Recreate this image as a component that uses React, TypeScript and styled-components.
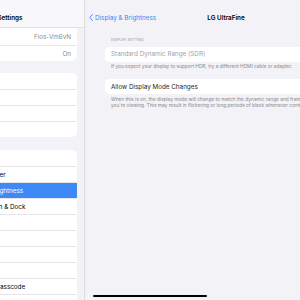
import { createGlobalStyle, styled } from "styled-components";

const GlobalStyle = createGlobalStyle`
    html, body {
        margin: 0;
        padding: 0;
    }
    body {
        background: #f2f2f7;
        font-family: Inter, "Noto Sans", sans-serif;
        -webkit-font-smoothing: antialiased;
    }
`

const Screen = styled.div`
    position: relative;
    display: flex;
    width: 300px;
    height: 300px;
    overflow: hidden;
    background: #f2f2f7;
`

const Sidebar = styled.div`
    width: 84px;
    flex-shrink: 0;
    overflow: hidden;
    border-right: 1px solid #dcdce0;
`

const SidebarInner = styled.div`
    display: flex;
    flex-direction: column;
    width: 148px;
    margin-left: -64px;
`

const SideNav = styled.div`
    display: flex;
    align-items: center;
    justify-content: center;
    height: 19px;
    padding-top: 8px;
    background: #f8f8fa;
    border-bottom: 1px solid #e2e2e5;
    font-size: 6.3px;
    font-weight: 600;
    color: #000;
`

const Group = styled.div<{ $cut?: boolean; $gap: number }>`
    margin: ${p => p.$gap}px 7px 0 10px;
    background: #fff;
    border-radius: ${p => (p.$cut ? "0 0 5px 5px" : "5px")};
    overflow: hidden;
`

const SideRow = styled.div<{ $selected?: boolean; $h?: number }>`
    display: flex;
    align-items: center;
    justify-content: space-between;
    box-sizing: border-box;
    height: ${p => p.$h ?? 16}px;
    padding: 0 6px 0 16px;
    font-size: 6.3px;
    color: ${p => (p.$selected ? "#fff" : "#000")};
    background: ${p => (p.$selected ? "#3d8af7" : "transparent")};
    white-space: nowrap;

    & + & {
        border-top: 1px solid #e6e6ea;
    }
`

const Value = styled.span`
    color: #8a8a8e;
`

const Detail = styled.div`
    display: flex;
    flex-direction: column;
    width: 282px;
    flex-shrink: 0;
`

const DetailNav = styled.div`
    display: grid;
    grid-template-columns: 1fr auto 1fr;
    align-items: center;
    height: 19px;
    margin-top: 8px;
`

const BackButton = styled.div`
    display: flex;
    align-items: center;
    gap: 2px;
    padding-left: 4px;
    font-size: 6.3px;
    color: #3a86f5;
    white-space: nowrap;
`

const Title = styled.div`
    font-size: 6.3px;
    font-weight: 600;
    color: #000;
`

const Content = styled.div`
    display: flex;
    flex-direction: column;
    padding: 11px 20px 0;
`

const SectionHeader = styled.div`
    padding-left: 6px;
    font-size: 3.6px;
    line-height: 5px;
    letter-spacing: 0.1px;
    text-transform: uppercase;
    color: #949499;
`

const Card = styled.div<{ $gap: number }>`
    display: flex;
    align-items: center;
    height: 15px;
    margin-top: ${p => p.$gap}px;
    padding: 0 6px;
    background: #fff;
    border-radius: 4px;
`

const CardText = styled.span<{ $muted?: boolean }>`
    font-size: 6.3px;
    color: ${p => (p.$muted ? "#a2a2a7" : "#1c1c1e")};
    white-space: nowrap;
`

const Footer = styled.div<{ $gap: number }>`
    margin-top: ${p => p.$gap}px;
    padding-left: 6px;
    font-size: 4.8px;
    line-height: 6.4px;
    color: #8a8a8e;
    white-space: nowrap;
`

const HomeIndicator = styled.div`
    position: absolute;
    left: 93px;
    top: 295px;
    width: 114px;
    height: 2px;
    border-radius: 1px;
    background: #000;
`

const groups = [
    ["Notifications", "Sounds", "Focus", "Screen Time"],
    [
        "General",
        "Control Center",
        "Display & Brightness",
        "Home Screen & Dock",
        "Accessibility",
        "Wallpaper",
        "Siri & Search",
        "Apple Pencil",
        "Touch ID & Passcode",
        "Battery",
    ],
]

export default function App() {
    return (
        <>
            <GlobalStyle />
            <Screen>
                <Sidebar>
                    <SidebarInner>
                        <SideNav>Settings</SideNav>
                        <Group $cut $gap={0}>
                            <SideRow $h={17}>
                                Wi-Fi <Value>Fios-Vm6vN</Value>
                            </SideRow>
                            <SideRow>
                                Bluetooth <Value>On</Value>
                            </SideRow>
                        </Group>
                        {groups.map((items, i) => (
                            <Group key={i} $gap={i === 0 ? 12 : 13}>
                                {items.map(label => (
                                    <SideRow key={label} $selected={label === "Display & Brightness"}>
                                        {label}
                                    </SideRow>
                                ))}
                            </Group>
                        ))}
                    </SidebarInner>
                </Sidebar>
                <Detail>
                    <DetailNav>
                        <BackButton>
                            <svg width="4" height="7" viewBox="0 0 4 7">
                                <path d="M3.4 0.5 L0.8 3.5 L3.4 6.5" fill="none" stroke="#3a86f5" strokeWidth="0.9" strokeLinecap="round" strokeLinejoin="round" />
                            </svg>
                            Display &amp; Brightness
                        </BackButton>
                        <Title>LG UltraFine</Title>
                        <div />
                    </DetailNav>
                    <Content>
                        <SectionHeader>Display Setting</SectionHeader>
                        <Card $gap={3.5}>
                            <CardText $muted>Standard Dynamic Range (SDR)</CardText>
                        </Card>
                        <Footer $gap={1.5}>
                            If you expect your display to support HDR, try a different HDMI cable or adapter.
                        </Footer>
                        <Card $gap={10}>
                            <CardText>Allow Display Mode Changes</CardText>
                        </Card>
                        <Footer $gap={1.5}>
                            When this is on, the display mode will change to match the dynamic range and framerate of the content
                            <br />
                            you're viewing. This may result in flickering or long periods of black whenever content starts or stops playing.
                        </Footer>
                    </Content>
                </Detail>
                <HomeIndicator />
            </Screen>
        </>
    )
}
